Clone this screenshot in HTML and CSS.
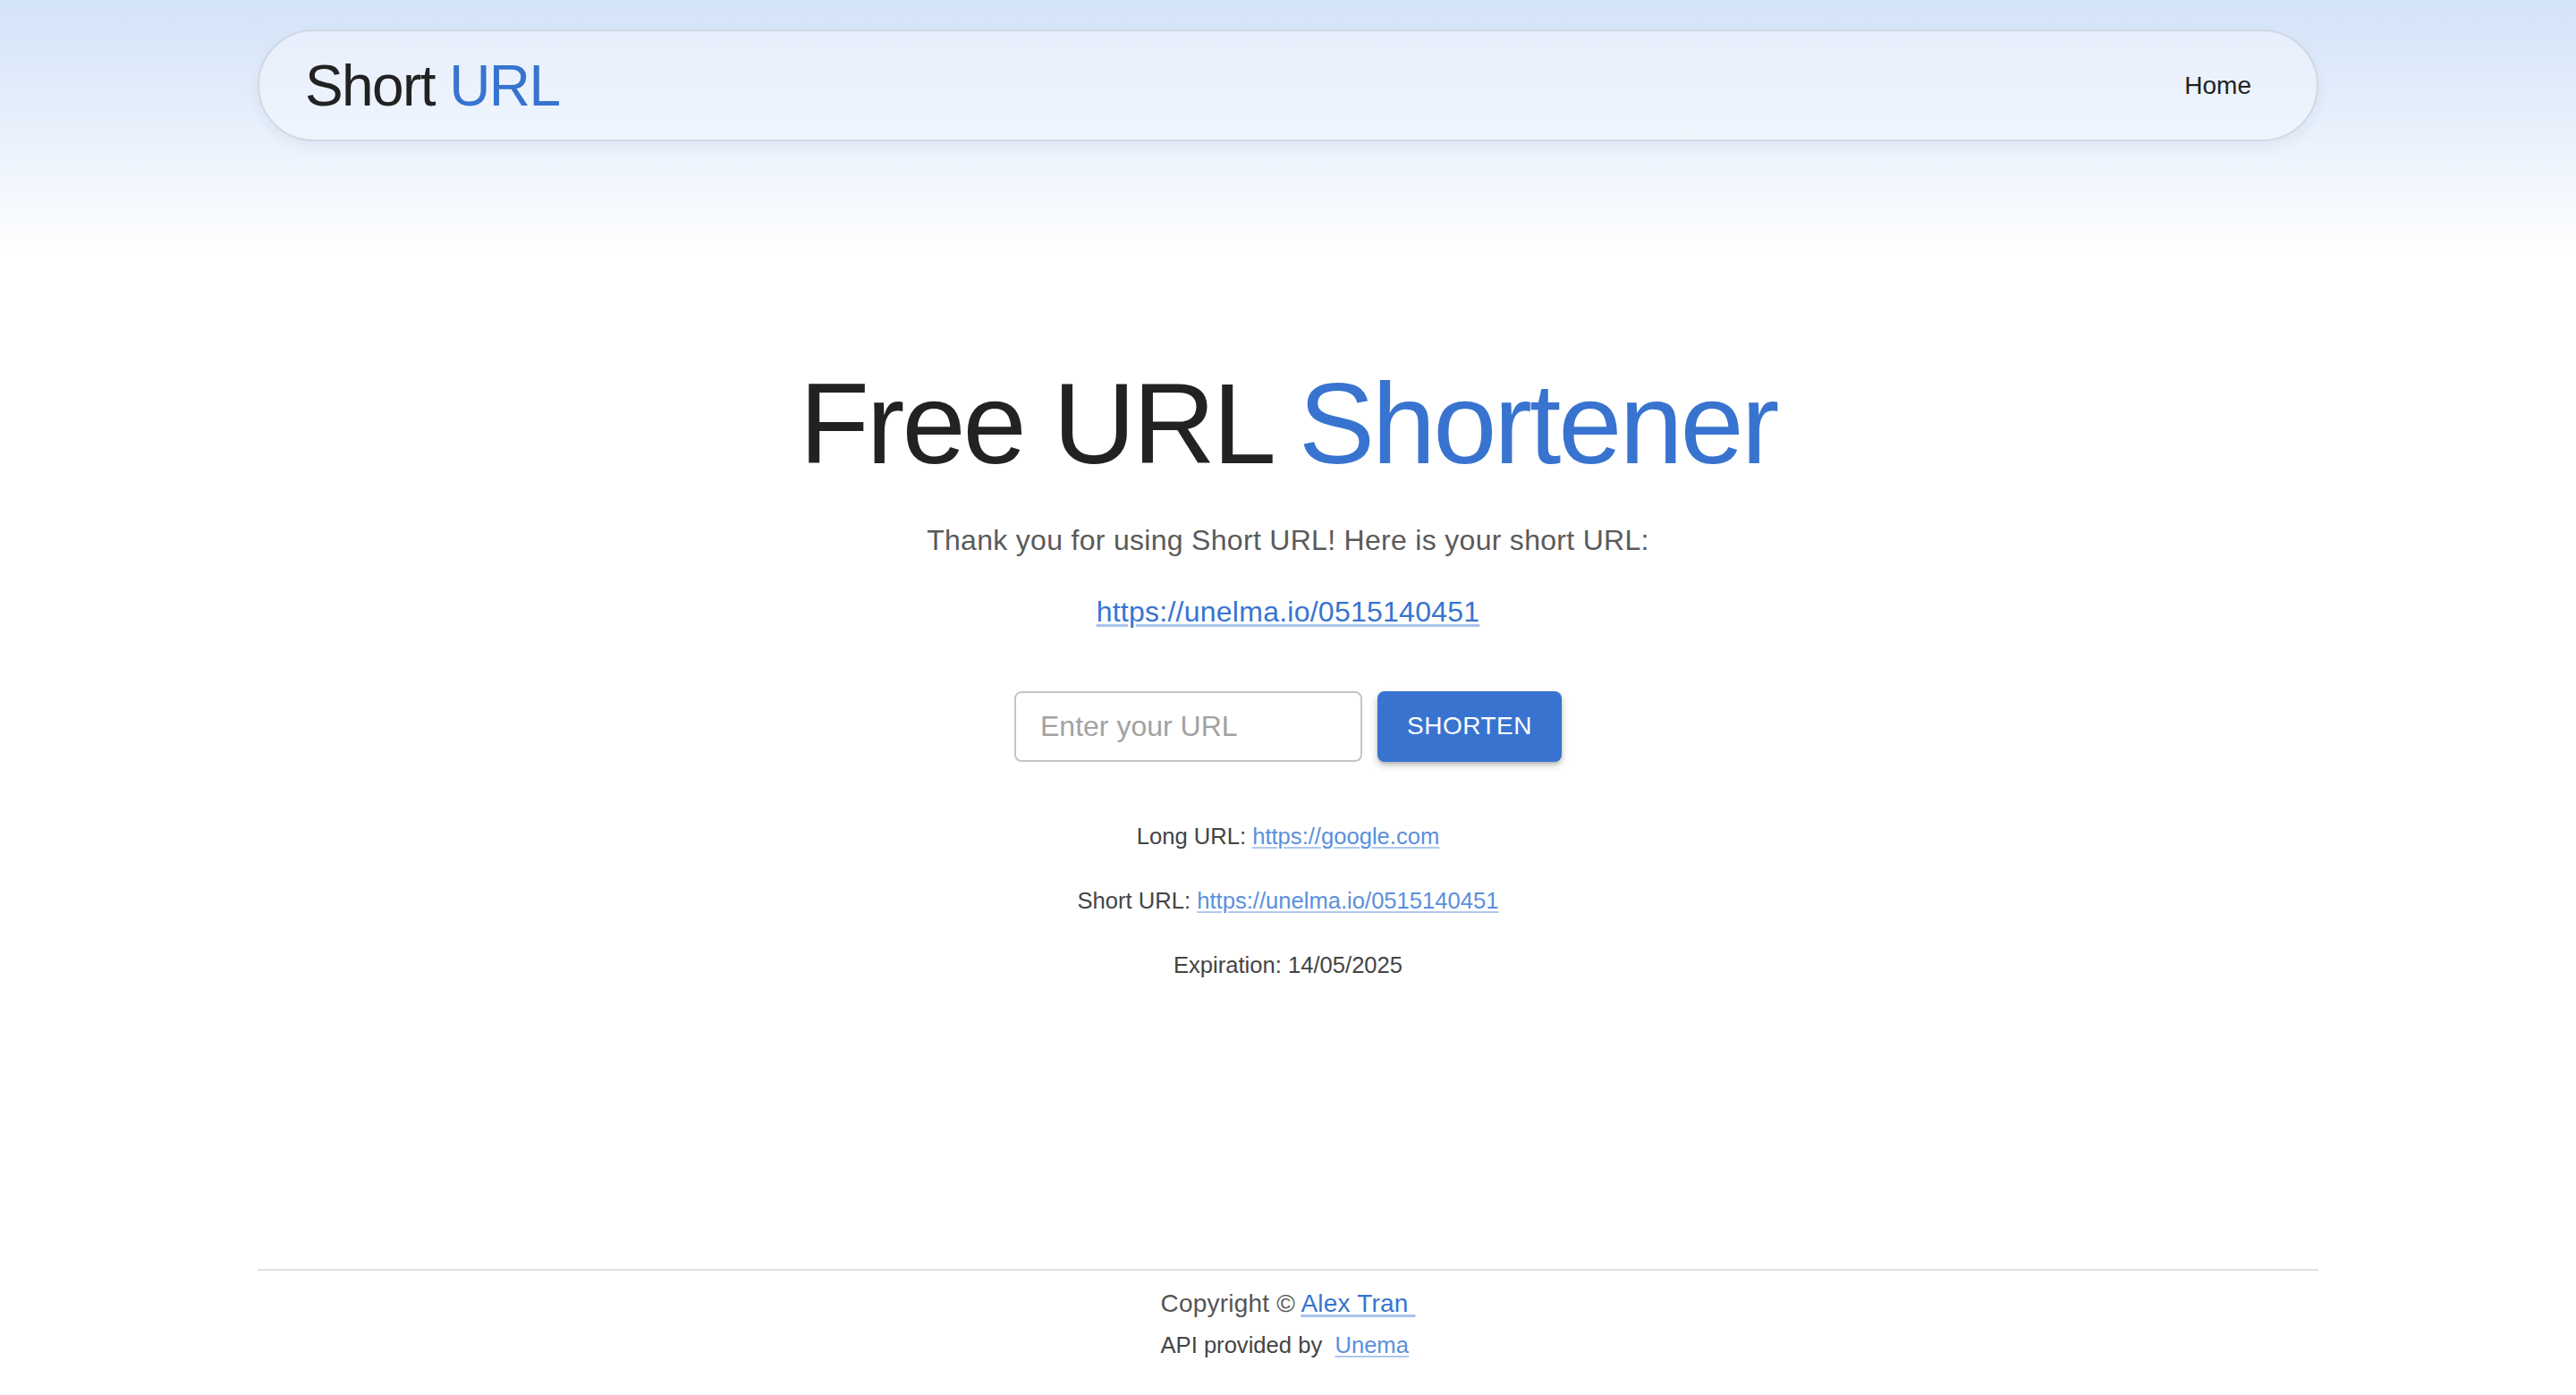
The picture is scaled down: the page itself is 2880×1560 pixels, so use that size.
FILE: index.html
```html
<!DOCTYPE html>
<html lang="en">
<head>
<meta charset="utf-8">
<title>Short URL</title>
<link rel="stylesheet" href="styles.css">
</head>
<body>
<header class="header">
  <nav class="navbar">
    <a class="brand" href="#"><span class="brand-dark">Short</span> <span class="brand-blue">URL</span></a>
    <a class="nav-link" href="#">Home</a>
  </nav>
</header>
<main class="main">
  <h1 class="title"><span class="title-dark">Free URL</span> <span class="title-blue">Shortener</span></h1>
  <p class="subtitle">Thank you for using Short URL! Here is your short URL:</p>
  <p class="result"><a class="result-link" href="#">https://unelma.io/0515140451</a></p>
  <form class="shorten-form">
    <input class="url-input" type="text" placeholder="Enter your URL">
    <button class="btn" type="button">SHORTEN</button>
  </form>
  <div class="info">
    <p class="info-line">Long URL: <a class="info-link" href="#">https://google.com</a></p>
    <p class="info-line">Short URL: <a class="info-link" href="#">https://unelma.io/0515140451</a></p>
    <p class="info-line">Expiration: 14/05/2025</p>
  </div>
</main>
<footer class="footer">
  <div class="footer-inner">
    <p class="copyright">Copyright © <a class="footer-link" href="#">Alex Tran&nbsp;</a></p>
    <p class="api">API provided by &nbsp;<a class="footer-link-light" href="#">Unema</a></p>
  </div>
</footer>
</body>
</html>
```

FILE: styles.css
```css
* {
  box-sizing: border-box;
}

html, body {
  margin: 0;
  padding: 0;
}

body {
  min-height: 1560px;
  display: flex;
  flex-direction: column;
  font-family: "Liberation Sans", Arial, Helvetica, sans-serif;
  color: #222222;
  background: linear-gradient(to bottom, #d3e3f9 0px, #e9f1fc 150px, #ffffff 285px) no-repeat;
  background-color: #ffffff;
}

a {
  text-decoration: none;
}

.header {
  width: 80%;
  margin: 0 auto;
  padding-top: 33px;
}

.navbar {
  height: 125px;
  display: flex;
  align-items: center;
  justify-content: space-between;
  padding: 0 73px 0 51px;
  border: 2px solid #d2d8e0;
  border-radius: 63px;
  background: linear-gradient(to bottom, #e7effc, #eff5fd);
  box-shadow: 0 6px 14px rgba(120, 150, 190, 0.12);
}

.brand {
  font-size: 64px;
  letter-spacing: -0.025em;
  line-height: 1;
}

.brand-dark {
  color: #222222;
}

.brand-blue {
  color: #3874cf;
}

.nav-link {
  font-size: 28px;
  color: #222222;
}

.main {
  flex: 1;
  text-align: center;
}

.title {
  margin: 246px 0 0;
  font-size: 128px;
  font-weight: 400;
  line-height: 140.8px;
  letter-spacing: -0.024em;
}

.title-dark {
  color: #222222;
}

.title-blue {
  color: #3874cf;
}

.subtitle {
  margin: 35px 0 0;
  font-size: 32px;
  line-height: 48px;
  letter-spacing: 0.3px;
  color: #5a5a5a;
}

.result {
  margin: 32px 0 0;
  font-size: 32px;
  line-height: 48px;
  letter-spacing: 0.25px;
}

.result-link {
  color: #3874cf;
  text-decoration: underline;
  text-decoration-color: #a9c3ec;
  text-decoration-thickness: 3px;
  text-underline-offset: 3px;
}

.shorten-form {
  margin-top: 65px;
  display: flex;
  justify-content: center;
  gap: 17px;
}

.url-input {
  width: 389px;
  height: 79px;
  padding: 0 27px;
  border: 2px solid #c4c4c4;
  border-radius: 8px;
  font-family: "Liberation Sans", Arial, Helvetica, sans-serif;
  font-size: 32px;
  color: #222222;
  background: #ffffff;
  outline: none;
}

.url-input::placeholder {
  color: #a2a2a2;
}

.btn {
  width: 206px;
  height: 79px;
  padding: 0;
  border: none;
  border-radius: 8px;
  background: #3874cf;
  color: #ffffff;
  font-family: "Liberation Sans", Arial, Helvetica, sans-serif;
  font-size: 28px;
  letter-spacing: 0.5px;
  box-shadow: 0 4px 8px rgba(0, 0, 0, 0.22), 0 2px 3px rgba(0, 0, 0, 0.12);
}

.info {
  margin-top: 64px;
}

.info-line {
  margin: 0 0 33.6px;
  font-size: 25.6px;
  line-height: 38.4px;
  color: #444444;
}

.info-link {
  color: #5b8fdc;
  text-decoration: underline;
  text-decoration-color: #b0c8ee;
  text-decoration-thickness: 2px;
  text-underline-offset: 3px;
}

.footer {
  width: 80%;
  margin: 0 auto;
  border-top: 2px solid #e0e0e0;
  padding: 16px 0 37px;
  display: flex;
  justify-content: center;
}

.footer-inner {
  text-align: left;
}

.copyright {
  margin: 0;
  font-size: 28px;
  line-height: 42px;
  letter-spacing: 0.2px;
  color: #555555;
}

.footer-link {
  color: #3874cf;
  text-decoration: underline;
  text-decoration-color: #a9c3ec;
  text-decoration-thickness: 3px;
  text-underline-offset: 3px;
}

.api {
  margin: 6px 0 0;
  font-size: 25.6px;
  line-height: 38.4px;
  color: #444444;
}

.footer-link-light {
  color: #5b8fdc;
  text-decoration: underline;
  text-decoration-color: #b0c8ee;
  text-decoration-thickness: 2px;
  text-underline-offset: 3px;
}
```
